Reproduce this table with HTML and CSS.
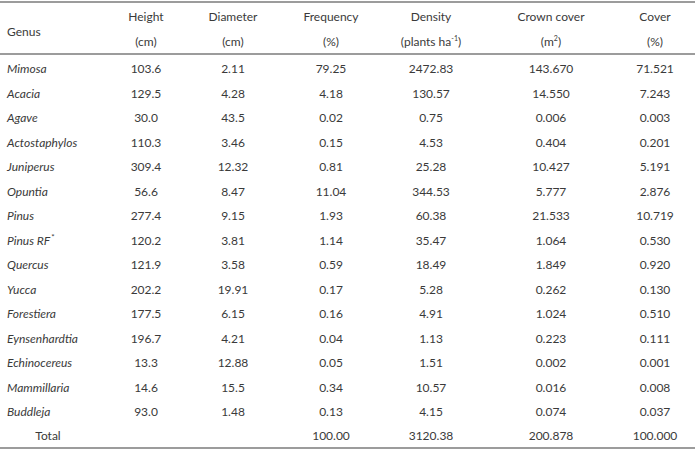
FILE: index.html
```html
<!DOCTYPE html>
<html lang="en">
<head>
<meta charset="utf-8">
<link rel="stylesheet" href="styles.css">
</head>
<body>
<table class="data">
  <colgroup>
    <col class="c-genus">
    <col class="c-height">
    <col class="c-diam">
    <col class="c-freq">
    <col class="c-dens">
    <col class="c-crown">
    <col class="c-cover">
  </colgroup>
  <thead>
    <tr>
      <th class="genus-head">Genus</th>
      <th><span class="l1">Height</span><span class="l2">(cm)</span></th>
      <th><span class="l1">Diameter</span><span class="l2">(cm)</span></th>
      <th><span class="l1">Frequency</span><span class="l2">(%)</span></th>
      <th><span class="l1">Density</span><span class="l2">(plants ha<sup>-1</sup>)</span></th>
      <th><span class="l1">Crown cover</span><span class="l2">(m<sup>2</sup>)</span></th>
      <th class="last"><span class="l1">Cover</span><span class="l2">(%)</span></th>
    </tr>
  </thead>
  <tbody>
    <tr><td class="name">Mimosa</td><td>103.6</td><td>2.11</td><td>79.25</td><td>2472.83</td><td>143.670</td><td class="last">71.521</td></tr>
    <tr><td class="name">Acacia</td><td>129.5</td><td>4.28</td><td>4.18</td><td>130.57</td><td>14.550</td><td class="last">7.243</td></tr>
    <tr><td class="name">Agave</td><td>30.0</td><td>43.5</td><td>0.02</td><td>0.75</td><td>0.006</td><td class="last">0.003</td></tr>
    <tr><td class="name">Actostaphylos</td><td>110.3</td><td>3.46</td><td>0.15</td><td>4.53</td><td>0.404</td><td class="last">0.201</td></tr>
    <tr><td class="name">Juniperus</td><td>309.4</td><td>12.32</td><td>0.81</td><td>25.28</td><td>10.427</td><td class="last">5.191</td></tr>
    <tr><td class="name">Opuntia</td><td>56.6</td><td>8.47</td><td>11.04</td><td>344.53</td><td>5.777</td><td class="last">2.876</td></tr>
    <tr><td class="name">Pinus</td><td>277.4</td><td>9.15</td><td>1.93</td><td>60.38</td><td>21.533</td><td class="last">10.719</td></tr>
    <tr><td class="name">Pinus RF<sup class="ast">*</sup></td><td>120.2</td><td>3.81</td><td>1.14</td><td>35.47</td><td>1.064</td><td class="last">0.530</td></tr>
    <tr><td class="name">Quercus</td><td>121.9</td><td>3.58</td><td>0.59</td><td>18.49</td><td>1.849</td><td class="last">0.920</td></tr>
    <tr><td class="name">Yucca</td><td>202.2</td><td>19.91</td><td>0.17</td><td>5.28</td><td>0.262</td><td class="last">0.130</td></tr>
    <tr><td class="name">Forestiera</td><td>177.5</td><td>6.15</td><td>0.16</td><td>4.91</td><td>1.024</td><td class="last">0.510</td></tr>
    <tr><td class="name">Eynsenhardtia</td><td>196.7</td><td>4.21</td><td>0.04</td><td>1.13</td><td>0.223</td><td class="last">0.111</td></tr>
    <tr><td class="name">Echinocereus</td><td>13.3</td><td>12.88</td><td>0.05</td><td>1.51</td><td>0.002</td><td class="last">0.001</td></tr>
    <tr><td class="name">Mammillaria</td><td>14.6</td><td>15.5</td><td>0.34</td><td>10.57</td><td>0.016</td><td class="last">0.008</td></tr>
    <tr><td class="name">Buddleja</td><td>93.0</td><td>1.48</td><td>0.13</td><td>4.15</td><td>0.074</td><td class="last">0.037</td></tr>
    <tr class="total"><td class="total-label">Total</td><td></td><td></td><td>100.00</td><td>3120.38</td><td>200.878</td><td class="last">100.000</td></tr>
  </tbody>
</table>
</body>
</html>
```

FILE: styles.css
```css
html, body {
  margin: 0;
  padding: 0;
  background: #ffffff;
}

body {
  padding-top: 1px;
  font-family: Lato, "Liberation Sans", sans-serif;
  font-size: 12px;
  color: #3a3a3a;
}

.data {
  width: 695px;
  border-collapse: collapse;
  table-layout: fixed;
  border-top: 2px solid #9c9c9c;
  border-bottom: 2px solid #9c9c9c;
}

.c-genus { width: 104px; }
.c-height { width: 84px; }
.c-diam { width: 90px; }
.c-freq { width: 106px; }
.c-dens { width: 94px; }
.c-crown { width: 146px; }
.c-cover { width: 71px; }

thead tr {
  border-bottom: 2px solid #9c9c9c;
}

th {
  font-weight: 400;
  text-align: center;
  padding: 0;
  vertical-align: top;
}

th .l1 {
  display: block;
  height: 28px;
  line-height: 28px;
}

th .l2 {
  display: block;
  height: 22px;
  line-height: 22px;
}

th.genus-head {
  text-align: left;
  padding-left: 7px;
  vertical-align: middle;
  padding-top: 6px;
}

th.last, td.last {
  padding-right: 9px;
}

sup {
  font-size: 7px;
  line-height: 0;
  vertical-align: 5px;
}

sup.ast {
  font-style: normal;
  font-size: 8px;
  margin-left: 1px;
}

td {
  padding: 3px 0 0;
  height: 21.5px;
  line-height: 21.5px;
  text-align: center;
  white-space: nowrap;
}

td.name {
  text-align: left;
  padding-left: 7px;
  font-style: italic;
}

.total td {
  padding-top: 1px;
  height: 23.5px;
  line-height: 21.5px;
}

td.total-label {
  text-align: center;
  padding-right: 8px;
}
```
